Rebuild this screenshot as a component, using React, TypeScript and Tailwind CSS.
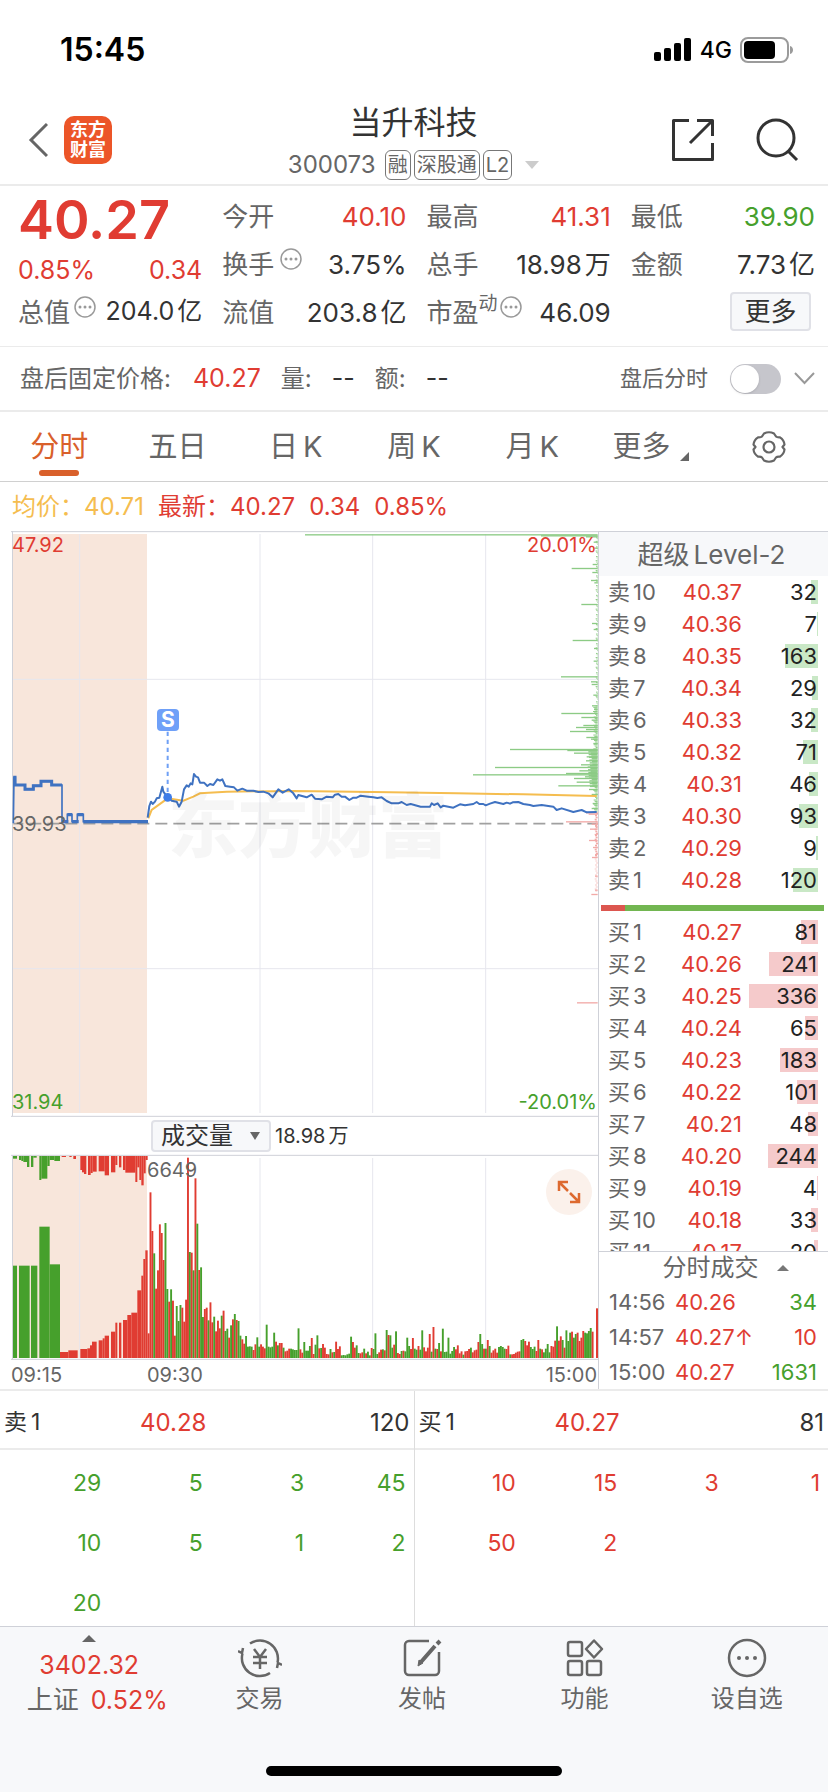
import { useState } from 'react'
import type { ReactNode } from 'react'

type Tone = 'up' | 'down' | 'flat'
type Level = [label: string, price: string, volume: number]

const TONE: Record<Tone, string> = {
  up: 'text-[#e03c32]',
  down: 'text-[#46a02c]',
  flat: 'text-[#333333]',
}

const ASKS: Level[] = [
  ['卖10', '40.37', 32],
  ['卖9', '40.36', 7],
  ['卖8', '40.35', 163],
  ['卖7', '40.34', 29],
  ['卖6', '40.33', 32],
  ['卖5', '40.32', 71],
  ['卖4', '40.31', 46],
  ['卖3', '40.30', 93],
  ['卖2', '40.29', 9],
  ['卖1', '40.28', 120],
]

const BIDS: Level[] = [
  ['买1', '40.27', 81],
  ['买2', '40.26', 241],
  ['买3', '40.25', 336],
  ['买4', '40.24', 65],
  ['买5', '40.23', 183],
  ['买6', '40.22', 101],
  ['买7', '40.21', 48],
  ['买8', '40.20', 244],
  ['买9', '40.19', 4],
  ['买10', '40.18', 33],
  ['买11', '40.17', 20],
]

const TRADES: Array<{ time: string; price: string; volume: number; tone: Tone }> = [
  { time: '14:56', price: '40.26', volume: 34, tone: 'down' },
  { time: '14:57', price: '40.27↑', volume: 10, tone: 'up' },
  { time: '15:00', price: '40.27', volume: 1631, tone: 'down' },
]

const TABS = ['分时', '五日', '日K', '周K', '月K', '更多']

// Call auction, 09:15 - 09:30
const AUCTION_LINE =
  '40,910 42,770 47,770 47,795 75,795 75,808 100,808 100,797 123,797 123,784 155,784 155,795 186,795 186,905 202,905 202,883 216,883 216,905 232,905 232,883 250,883 250,905 442,905'

const PRICE_LINE =
  '443,893 448,858 453,845 458,852 465,845 470,835 478,833 487,800 490,815 503,832 515,842 530,845 537,860 545,845 552,808 560,796 566,800 572,790 577,793 582,762 588,770 594,772 600,788 612,788 622,798 630,792 640,795 652,778 660,782 667,778 676,798 690,800 702,802 712,812 727,806 740,812 760,812 775,816 790,815 805,820 818,832 835,808 848,818 866,808 880,820 890,835 895,825 920,832 935,824 945,836 965,838 980,830 998,832 1005,824 1015,822 1025,830 1035,830 1048,840 1060,833 1070,833 1082,827 1105,830 1120,832 1132,834 1145,832 1160,843 1175,850 1195,850 1205,846 1220,855 1232,852 1262,860 1290,860 1295,850 1302,855 1313,850 1322,862 1330,857 1360,863 1380,853 1395,856 1420,852 1430,846 1438,852 1450,852 1457,856 1470,851 1485,846 1510,852 1520,848 1530,851 1538,847 1555,846 1570,852 1590,855 1600,858 1625,855 1660,860 1670,870 1685,865 1720,876 1745,870 1760,877 1790,876'

const AVERAGE_LINE =
  '445,895 455,870 503,835 550,842 580,830 600,820 680,815 880,813 1120,816 1370,820 1570,823 1790,828'

// Resting orders by price: [y, length]
const ASK_DEPTH: Array<[number, number]> = [
  [44, 878], [47, 170], [50, 35], [66, 12], [84, 10], [133, 15], [145, 78], [157, 16], [181, 20],
  [188, 10], [253, 49], [310, 17], [328, 12], [361, 75], [385, 11], [423, 12], [470, 110],
  [485, 20], [493, 18], [525, 13], [557, 17], [568, 11], [580, 109], [592, 49], [600, 18],
  [616, 43], [622, 65], [628, 35], [634, 83], [652, 34], [657, 20], [670, 13], [688, 263],
  [691, 91], [699, 71], [710, 33], [722, 35], [734, 50], [742, 308], [752, 55], [760, 95],
  [764, 374], [770, 38], [775, 71], [786, 63], [797, 118], [808, 26], [823, 18], [850, 15], [865, 18],
]
const BID_DEPTH: Array<[number, number]> = [
  [878, 35], [882, 27], [905, 95], [912, 18], [918, 8], [927, 23], [943, 9], [961, 26], [982, 14],
  [1003, 8], [1012, 17], [1068, 8], [1110, 8], [1123, 19], [1448, 62],
]

// Auction volume blocks: [x from, x to, y]
const MATCHED: Array<[number, number, number, 'r' | 'g']> = [
  [39, 51, 467, 'g'], [57, 89, 467, 'g'], [93, 112, 467, 'g'], [118, 149, 350, 'g'], [149, 180, 463, 'g'],
  [180, 205, 726, 'r'], [205, 233, 721, 'r'], [241, 262, 717, 'r'], [262, 270, 715, 'r'],
  [270, 276, 706, 'r'], [276, 290, 695, 'r'], [296, 308, 691, 'r'], [308, 314, 685, 'r'],
  [314, 327, 677, 'r'], [333, 346, 665, 'r'], [346, 352, 638, 'r'], [357, 364, 638, 'r'],
  [369, 382, 630, 'r'], [382, 394, 615, 'r'], [394, 412, 608, 'r'], [412, 424, 541, 'r'],
  [424, 430, 497, 'r'], [430, 436, 447, 'r'], [436, 443, 421, 'r'],
]
const UNMATCHED: Array<[number, number, number, 'r' | 'g']> = [
  [39, 51, 146, 'g'], [57, 64, 150, 'g'], [64, 70, 153, 'g'], [70, 81, 156, 'g'], [81, 88, 171, 'g'],
  [93, 100, 171, 'g'], [100, 110, 143, 'g'], [118, 124, 210, 'g'], [124, 142, 206, 'g'],
  [142, 149, 168, 'g'], [149, 163, 150, 'g'], [163, 180, 153, 'g'], [185, 198, 141, 'r'],
  [208, 215, 141, 'r'], [220, 228, 147, 'r'], [241, 246, 180, 'r'], [246, 252, 187, 'r'],
  [252, 259, 192, 'r'], [264, 272, 195, 'r'], [272, 278, 189, 'r'], [278, 290, 185, 'r'],
  [296, 314, 184, 'r'], [314, 327, 196, 'r'], [333, 346, 187, 'r'], [346, 352, 165, 'r'],
  [357, 364, 172, 'r'], [369, 376, 180, 'r'], [376, 406, 188, 'r'], [406, 412, 216, 'r'],
  [412, 418, 172, 'r'], [418, 424, 210, 'r'], [424, 431, 226, 'r'], [431, 437, 190, 'r'],
  [437, 443, 150, 'r'],
]

// Minute volume, y of the bar top and its colour
const MORNING =
  '670r 247r 363r 430g 536r 481r 343r 369r 450r 339g 537g 575r 538g 572r 677r 588g 633g 585g 593r 635r 569r 143r 426g 428r 481g 205r 341g 480r 472g 621g 597r 593r 631g 577r 637r 620g 664r 632r 655r 617g 602r 663g 656g 683r 646g 628r 612g 630r 633g 677g 688r 701r 678g 710g 709g 710g 720r 703r 682g 710g 703r 710r 715r 644g 710g 712g 710g 668g 695r 706g 699r 699r 713g 724r 722r 716r 716g 718g 720g 720g 655g 718r 728r'
const DAY =
  '696g 722g 722g 708g 684r 732r 704g 676g 715r 714g 702r 713r 732r 733r 717g 727r 726g 695r 717r 709r 736g 735g 736g 733g 731g 680g 696r 713r 706g 729g 730r 727r 716g 730r 725g 736g 714r 717g 670g 732g 727r 719r 718g 721r 660g 675r 676g 713g 704r 664g 729r 732r 723g 722r 724g 683g 708g 717r 684r 716g 719g 708r 719g 661g 712r 724r 713r 672r 725g 651r 716g 717r 699g 724r 656g 726g 725g 683g 731g 723g 711g 718r 706r 730r 724r 734g 724r 723r 717r 713g 727r 721r 719r 696r 672g 702g 716r 716g 690r 708g 728r 721r 716r 728r 711g 708g 711g 716g 717r 707r 733g 733r 732r 728r 725r 724r 690g 687g 693r 706r 695r 711g 717g 710g 723r 690r 716g 718r 727g 716g 702g 727g 708r 710r 692r 649g 692r 679r 690g 713r 661g 693g 668g 665r 683g 672g 668r 693r 683r 663r 668g 670g 663g 654g 665r'

const FILL = { r: '#e03c32', g: '#46a02c' }

function toBars(source: string, from: number, to: number) {
  const items = source.split(' ')
  const step = (to - from) / (items.length - 1)
  return items.map((item, i) => ({
    x: from + i * step,
    y: parseInt(item, 10),
    fill: item.endsWith('r') ? FILL.r : FILL.g,
  }))
}

const VOLUME_BARS = [...toBars(MORNING, 443, 904), ...toBars(DAY, 910, 1775)]

// 万 and 亿 stand a little apart from the number
function Amount({ value }: { value: string }) {
  const unit = /[万亿]$/.test(value) ? value.slice(-1) : ''
  return (
    <span className="flex gap-[3px]">
      <span>{unit ? value.slice(0, -1) : value}</span>
      {unit && <span>{unit}</span>}
    </span>
  )
}

function StatusBar() {
  return (
    <div className="flex h-[95px] items-center justify-between pr-[34px] pl-[60px] pt-[5px] text-black">
      <span className="text-[32px] font-semibold">15:45</span>
      <div className="flex items-center gap-2">
        <svg width="38" height="24" viewBox="0 0 38 24" aria-hidden="true">
          <rect x="0" y="14" width="7" height="9" rx="2" />
          <rect x="10" y="10" width="7" height="13" rx="2" />
          <rect x="20" y="5" width="7" height="18" rx="2" />
          <rect x="30" y="0" width="7" height="23" rx="2" />
        </svg>
        <span className="text-[23px] font-medium">4G</span>
        <svg width="54" height="26" viewBox="0 0 54 26" aria-hidden="true">
          <rect x="1" y="1" width="47" height="24" rx="7" fill="none" stroke="#9b9b9b" strokeWidth="2" />
          <rect x="4" y="4" width="31" height="18" rx="4" />
          <path d="M50 9c4 1 4 7 0 8z" fill="#9b9b9b" />
        </svg>
      </div>
    </div>
  )
}

function Header() {
  return (
    <header className="grid h-[91px] grid-cols-[1fr_auto_1fr] items-center border-b-2 border-[#ebebeb] pr-[29px] pl-7">
      <div className="flex items-center gap-4">
        <button type="button" aria-label="返回">
          <svg width="20" height="36" viewBox="0 0 20 36" fill="none" stroke="#666" strokeWidth="3">
            <path d="M19 2L3 18l16 16" />
          </svg>
        </button>
        <div className="flex size-12 flex-col items-center justify-center rounded-[10px] bg-[#ec5528] text-[18px] leading-[20px] font-bold text-white">
          <span>东方</span>
          <span>财富</span>
        </div>
      </div>
      <div className="flex flex-col items-center gap-[6px] pt-[5px]">
        <h1 className="text-[32px] leading-[40px] text-[#333]">当升科技</h1>
        <div className="flex h-8 items-center gap-[3px] text-[#666]">
          <span className="pr-[6px] text-[24px]">300073</span>
          <Tag>融</Tag>
          <Tag>深股通</Tag>
          <Tag>L2</Tag>
          <svg className="ml-[10px]" width="14" height="8" viewBox="0 0 14 8" fill="#ccc" aria-hidden="true">
            <path d="M0 0h14L7 8z" />
          </svg>
        </div>
      </div>
      <div className="flex items-center justify-end gap-10">
        <button type="button" aria-label="分享">
          <svg width="44" height="44" viewBox="0 0 44 44" fill="none" stroke="#333" strokeWidth="3">
            <path d="M18 2.500H2.500V41.500H41.500V25M26 2.500H41.500V18M41 3L19 25" strokeLinejoin="round" />
          </svg>
        </button>
        <button type="button" aria-label="搜索">
          <svg width="44" height="44" viewBox="0 0 44 44" fill="none" stroke="#333" strokeWidth="3">
            <circle cx="21" cy="20" r="18" />
            <path d="M33 33l9 9" />
          </svg>
        </button>
      </div>
    </header>
  )
}

function Tag({ children }: { children: ReactNode }) {
  return (
    <span className="flex h-[30px] items-center rounded-md border border-[#777] px-[2px] text-[20px]">
      {children}
    </span>
  )
}

function InfoDots() {
  return (
    <svg className="mb-[10px] shrink-0" width="22" height="22" viewBox="0 0 22 22" fill="#999" aria-hidden="true">
      <circle cx="11" cy="11" r="10" fill="none" stroke="#999" strokeWidth="1.500" />
      <circle cx="6" cy="11" r="1.500" />
      <circle cx="11" cy="11" r="1.500" />
      <circle cx="16" cy="11" r="1.500" />
    </svg>
  )
}

interface StatProps {
  label: string
  value: string
  tone?: Tone
  mark?: string
  info?: boolean
}

function Stat({ label, value, tone = 'flat', mark, info }: StatProps) {
  return (
    <div className="flex h-12 items-center justify-between whitespace-nowrap">
      <span className="flex items-center">
        <span className="text-[#666]">{label}</span>
        {mark && <sup className="top-0 mb-4 text-[19px] text-[#666]">{mark}</sup>}
        {info && <span className={mark ? 'pl-[2px]' : 'pl-[6px]'}><InfoDots /></span>}
      </span>
      <span className={TONE[tone]}>
        <Amount value={value} />
      </span>
    </div>
  )
}

function Quote() {
  return (
    <section className="grid grid-cols-4 gap-x-5 border-b border-[#ebebeb] pt-[6px] pr-[13px] pb-[10px] pl-[18px] text-[26px]">
      <div className="whitespace-nowrap">
        <div className="flex h-[54px] items-center text-[54px] font-semibold text-[#e03c32]">40.27</div>
        <div className="flex h-[50px] items-center justify-between text-[25px] text-[#e03c32]">
          <span>0.85%</span>
          <span>0.34</span>
        </div>
        <div className="flex h-8 items-center justify-between">
          <span className="flex items-center gap-1 text-[#666]">
            总值
            <InfoDots />
          </span>
          <span className="text-[25px] text-[#333]">
            <Amount value="204.0亿" />
          </span>
        </div>
      </div>
      <div>
        <Stat label="今开" value="40.10" tone="up" />
        <Stat label="换手" value="3.75%" info />
        <Stat label="流值" value="203.8亿" />
      </div>
      <div>
        <Stat label="最高" value="41.31" tone="up" />
        <Stat label="总手" value="18.98万" />
        <Stat label="市盈" value="46.09" mark="动" info />
      </div>
      <div>
        <Stat label="最低" value="39.90" tone="down" />
        <Stat label="金额" value="7.73亿" />
        <div className="flex h-12 items-center justify-end pr-1 pb-px">
          <button
            type="button"
            className="h-[39px] w-[81px] rounded border-2 border-[#e0e1e7] bg-[#f7f8fa] leading-none text-[#333]"
          >
            更多
          </button>
        </div>
      </div>
    </section>
  )
}

function AfterHours() {
  const [enabled, setEnabled] = useState(false)

  return (
    <section className="flex h-[65px] items-center border-b-2 border-[#ebebeb] pr-[13px] pl-5 text-[24px] text-[#666]">
      <span>盘后固定价格:</span>
      <span className="pl-[22px] text-[25px] text-[#e03c32]">40.27</span>
      <span className="pl-5">量:</span>
      <span className="pl-5 text-[25px] text-[#333]">--</span>
      <span className="pl-5">额:</span>
      <span className="pl-5 text-[25px] text-[#333]">--</span>
      <label className="ml-auto flex items-center gap-[22px] text-[22px]">
        盘后分时
        <input
          type="checkbox"
          checked={enabled}
          onChange={(e) => setEnabled(e.target.checked)}
          className="peer sr-only"
        />
        <span className="flex h-[30px] w-[51px] rounded-full bg-[#c6c6cc] p-px peer-checked:justify-end peer-checked:bg-[#d9602b]">
          <span className="size-7 rounded-full bg-white shadow" />
        </span>
      </label>
      <button type="button" aria-label="展开" className="pl-[13px]">
        <svg width="21" height="13" viewBox="0 0 21 13" fill="none" stroke="#999" strokeWidth="2">
          <path d="M1 1l9.500 10L20 1" />
        </svg>
      </button>
    </section>
  )
}

function Tabs() {
  const [active, setActive] = useState('分时')

  return (
    <nav className="grid h-[70px] grid-cols-7 border-b border-[#d0d0d0]">
      {TABS.map((tab) => (
        <button
          key={tab}
          type="button"
          onClick={() => setActive(tab)}
          className={`relative flex h-full items-center justify-center gap-[5px] text-[29px] ${
            tab === active ? 'text-[#d9602b]' : 'text-[#666]'
          }`}
        >
          {tab.endsWith('K') ? (
            <>
              <span>{tab[0]}</span>
              <span>K</span>
            </>
          ) : (
            tab
          )}
          {tab === '更多' && (
            <svg className="mt-5 ml-1" width="9" height="9" viewBox="0 0 9 9" fill="#666" aria-hidden="true">
              <path d="M9 0v9H0z" />
            </svg>
          )}
          {tab === active && (
            <span className="absolute bottom-[5px] left-1/2 h-[6px] w-10 -translate-x-1/2 rounded-full bg-[#d9602b]" />
          )}
        </button>
      ))}
      <button type="button" aria-label="设置" className="flex items-center justify-center">
        <svg width="34" height="32" viewBox="0 0 34 32" fill="none" stroke="#666" strokeWidth="2.200">
          <path
            d="M12 2.500Q17 0 22 2.500L24 5.500Q25 6.500 28 6.300Q32 9 32.500 13.500L30.500 16L32.500 18.500Q32 23 28 25.700Q25 25.500 24 26.500L22 29.500Q17 32 12 29.500L10 26.500Q9 25.500 6 25.700Q2 23 1.500 18.500L3.500 16L1.500 13.500Q2 9 6 6.300Q9 6.500 10 5.500Z"
            strokeLinejoin="round"
          />
          <circle cx="17" cy="16" r="5.500" />
        </svg>
      </button>
    </nav>
  )
}

function PriceChart() {
  return (
    <div className="relative text-[20px] leading-6">
      {/* three chart units to a pixel */}
      <svg className="block h-auto w-full" viewBox="33 33 1761 1758">
        <rect x="39" y="42" width="402" height="1737" fill="#f8e6db" />
        <g stroke="#e6e7ee" strokeWidth="3">
          <path d="M239 42V1779M780 42V1779M1118 42V1779M1457 42V1779M39 478H1794M39 1346H1794" />
        </g>
        <path d="M33 35H1794M37.500 33V1788M33 1789H1794" stroke="#cfd1d8" strokeWidth="3" fill="none" />
        <path d="M40 911H1794" stroke="#a0a0a0" strokeWidth="5" strokeDasharray="36 18" strokeDashoffset="6" />
        <g fill="#8ccb85">
          {ASK_DEPTH.map(([y, w]) => (
            <rect key={y} x={1793 - w} y={y - 1.5} width={w} height="4" />
          ))}
          {Array.from({ length: 200 }, (_, i) => {
            const y = 46 + i * 4.15
            const dense = y > 690 && y < 800
            const w = dense ? 16 + ((i * 7) % 15) : y > 560 ? 5 + ((i * 7) % 10) : (i * 5) % 7
            return <rect key={i} x={1793 - w} y={y} width={w} height={dense ? 4.2 : 3} />
          })}
        </g>
        <g fill="#f2aaa8">
          {BID_DEPTH.map(([y, w]) => (
            <rect key={y} x={1793 - w} y={y - 1.5} width={w} height="4" />
          ))}
          {Array.from({ length: 40 }, (_, i) => (
            <rect key={i} x={1788 - ((i * 3) % 5)} y={878 + i * 6} width="6" height={i < 22 ? 5 : 2} />
          ))}
        </g>
        <polyline points={AVERAGE_LINE} fill="none" stroke="#f5bd4f" strokeWidth="6" />
        <polyline points={AUCTION_LINE} fill="none" stroke="#3f72c1" strokeWidth="5" />
        <polyline
          points="44,770 44,795 75,795 75,808 100,808 100,797 123,797 123,784 155,784 155,795 186,795"
          fill="none"
          stroke="#3f72c1"
          strokeWidth="9"
        />
        <path d="M186 905H205M202 884H216M216 905H236M232 884H250M250 905H444" stroke="#3f72c1" strokeWidth="10" />
        <polyline points={PRICE_LINE} fill="none" stroke="#3f72c1" strokeWidth="6" strokeLinejoin="round" />
        <path d="M503 635V820" stroke="#6fa0f5" strokeWidth="6" strokeDasharray="13 11" />
        <circle cx="503" cy="832" r="13" fill="#3f7de8" />
      </svg>
      <span className="absolute top-[258px] left-[157px] text-[70px] leading-[76px] font-black text-black/[0.035]">
        东方财富
      </span>
      <span className="absolute top-[178px] left-[146px] flex size-[22px] items-center justify-center rounded bg-[#6fa0f8] text-[21px] font-bold text-white">
        S
      </span>
      <span className="absolute top-[2px] left-px text-[#e03c32]">47.92</span>
      <span className="absolute top-[2px] right-px text-[#e03c32]">20.01%</span>
      <span className="absolute top-[281px] left-px text-[#666]">39.93</span>
      <span className="absolute bottom-[3px] left-px text-[#46a02c]">31.94</span>
      <span className="absolute right-px bottom-[3px] text-[#46a02c]">-20.01%</span>
    </div>
  )
}

function VolumeChart() {
  return (
    <>
      <div className="flex h-[37px] items-center gap-1 pl-[140px] text-[20px] text-[#333]">
        <div className="relative">
          <select
            aria-label="指标"
            className="block h-[32px] w-[120px] appearance-none rounded border-2 border-[#e0e1e7] bg-[#f7f8fa] pl-2 text-[24px] leading-none"
          >
            <option>成交量</option>
            <option>成交额</option>
          </select>
          <svg
            className="pointer-events-none absolute top-3 right-[11px]"
            width="10"
            height="8"
            viewBox="0 0 10 8"
            fill="#666"
            aria-hidden="true"
          >
            <path d="M0 0h10L5 8z" />
          </svg>
        </div>
        <Amount value="18.98万" />
      </div>
      <div className="relative text-[20px] leading-6 text-[#666]">
        <svg className="block h-auto w-full" viewBox="33 132 1761 618">
          <rect x="39" y="138" width="402" height="606" fill="#f8e6db" />
          <path d="M239 144V744M780 144V744M1118 144V744M1457 144V744" stroke="#e6e7ee" strokeWidth="3" />
          <path d="M33 136H1794M37.500 136V748M33 748H1794" stroke="#cfd1d8" strokeWidth="3" fill="none" />
          {MATCHED.map(([from, to, y, c]) => (
            <rect key={from} x={from} y={y} width={to - from} height={744 - y} fill={FILL[c]} />
          ))}
          {UNMATCHED.map(([from, to, y, c]) => (
            <rect key={from} x={from} y="138" width={to - from} height={y - 138} fill={FILL[c]} />
          ))}
          {VOLUME_BARS.map((bar) => (
            <rect key={bar.x} x={bar.x} y={bar.y} width="5.700" height={744 - bar.y} fill={bar.fill} />
          ))}
          <rect x="1788" y="595" width="6" height="149" fill={FILL.r} />
        </svg>
        <span className="absolute top-[4px] left-[136px]">6649</span>
        <button
          type="button"
          aria-label="全屏"
          className="absolute top-[15px] right-[6px] flex size-[46px] items-center justify-center rounded-full bg-[#fbf1eb]"
        >
          <svg width="24" height="24" viewBox="0 0 24 24" fill="none" stroke="#dd6a30" strokeWidth="2.500">
            <path d="M2 11V2h9M2 2l9 9M22 13v9h-9M22 22l-9-9" />
          </svg>
        </button>
      </div>
      <div className="grid h-[29px] grid-cols-[136px_1fr_auto] items-center text-[20px] text-[#666]">
        <span>09:15</span>
        <span>09:30</span>
        <span className="pr-px">15:00</span>
      </div>
    </>
  )
}

function Depth({ levels, side }: { levels: Level[]; side: 'ask' | 'bid' }) {
  return (
    <table className="w-full table-fixed text-[22px] leading-7">
      <tbody>
        {levels.map(([label, price, volume]) => (
          <tr key={label} className="h-8">
            <th scope="row" className="w-[62px] p-0 pl-[9px] text-left font-normal whitespace-nowrap text-[#666]">
              <span className="flex gap-[3px]">
                <span>{label.slice(0, 1)}</span>
                <span>{label.slice(1)}</span>
              </span>
            </th>
            <td className="p-0 text-right text-[#e03c32]">{price}</td>
            <td className="relative w-[86px] p-0 pr-[11px] text-right text-[#222]">
              <span
                className={`absolute top-1 right-[10px] h-6 ${side === 'ask' ? 'bg-[#c9e8c6]' : 'bg-[#f5cacb]'}`}
                style={{ width: `${Math.round((volume / 336) * 69)}px` }}
              />
              <span className="relative">{volume}</span>
            </td>
          </tr>
        ))}
      </tbody>
    </table>
  )
}

function OrderBook() {
  return (
    <aside className="w-[230px] shrink-0 border-t border-l border-[#cfd1d8]">
      <h2 className="flex h-11 items-center justify-center gap-1 bg-[#f7f8fa] pr-1 text-[26px] text-[#666]">
        <span>超级</span>
        <span>Level-2</span>
      </h2>
      <Depth levels={ASKS} side="ask" />
      <div className="mt-[9px] mr-1 mb-[5px] ml-[2px] flex h-[6px] bg-[#72b651]">
        <div className="w-6 bg-[#dc564f]" />
      </div>
      <div className="h-[335px] overflow-hidden">
        <Depth levels={BIDS} side="bid" />
      </div>
      <button
        type="button"
        className="flex h-[33px] w-full items-center justify-center gap-[18px] border-t border-[#cfd1d8] pl-6 text-[24px] text-[#666]"
      >
        分时成交
        <svg width="12" height="6" viewBox="0 0 12 6" fill="#777" aria-hidden="true">
          <path d="M0 6L6 0l6 6z" />
        </svg>
      </button>
      <table className="w-full table-fixed text-[22px] leading-7">
        <tbody>
          {TRADES.map((trade) => (
            <tr key={trade.time} className="h-[35px]">
              <td className="w-[76px] p-0 pl-[10px] text-[#666]">{trade.time}</td>
              <td className="p-0 text-[#e03c32]">{trade.price}</td>
              <td className={`w-[70px] p-0 pr-[11px] text-right ${TONE[trade.tone]}`}>{trade.volume}</td>
            </tr>
          ))}
        </tbody>
      </table>
    </aside>
  )
}

interface QueueProps {
  name: string
  price: string
  volume: number
  rows: number[][]
  tone: Tone
}

function Queue({ name, price, volume, rows, tone }: QueueProps) {
  return (
    <div className="flex-1 text-[23px]">
      <div className="grid h-[59px] grid-cols-[136px_1fr_1fr] items-center border-b-2 border-[#ebebeb] px-1 pt-[6px] text-[#333]">
        <span>
          {name}
          <span className="pl-1">1</span>
        </span>
        <span className="text-[24px] text-[#e03c32]">{price}</span>
        <span className="text-right text-[24px]">{volume}</span>
      </div>
      <div className="h-[176px] overflow-hidden pt-[3px] pr-2">
        <table className={`w-full table-fixed ${TONE[tone]}`}>
          <tbody>
            {rows.map((row, i) => (
              <tr key={i} className="h-[60px]">
                {[0, 1, 2, 3].map((col) => (
                  <td key={col} className="p-0 text-right">
                    {row[col]}
                  </td>
                ))}
              </tr>
            ))}
          </tbody>
        </table>
      </div>
    </div>
  )
}

function NavItem({ label, children }: { label: string; children: ReactNode }) {
  return (
    <a href="#" className="flex flex-col items-center gap-[2px] pt-[10px] text-[24px] text-[#666]">
      <svg width="44" height="42" viewBox="0 0 44 42" fill="none" stroke="#666" strokeWidth="2.500" aria-hidden="true">
        {children}
      </svg>
      <span className="leading-9">{label}</span>
    </a>
  )
}

function BottomBar() {
  return (
    <footer className="border-t border-[#cfd1d8] bg-[#f7f8fa] pb-4">
      <nav className="grid grid-cols-5 pl-4">
        <a href="#" className="flex flex-col items-center pt-2 text-[25px] text-[#e03c32]">
          <svg className="mr-4" width="14" height="7" viewBox="0 0 14 7" fill="#666" aria-hidden="true">
            <path d="M0 7L7 0l7 7z" />
          </svg>
          <span className="mt-[5px] mr-4 leading-9">3402.32</span>
          <span className="flex items-center gap-3 leading-[34px]">
            <span className="text-[26px] text-[#666]">上证</span>0.52%
          </span>
        </a>
        <NavItem label="交易">
          <path d="M12 6.500A18 18 0 0 1 39.500 25.500M39 31l1-5 4 2M32 36A18 18 0 0 1 4.500 16.500M5 11l-1 5-4-2" />
          <path d="M16 12l6 8 6-8M22 20v12M15 20h14M15 26h14" />
        </NavItem>
        <NavItem label="发帖">
          <path d="M29 4H9a4 4 0 0 0-4 4v26a4 4 0 0 0 4 4h26a4 4 0 0 0 4-4V15" />
          <path d="M21 25L35 9M37 7l3-3" strokeWidth="4" />
          <path d="M18 29l1-6 4 3z" fill="#666" strokeWidth="1" />
        </NavItem>
        <NavItem label="功能">
          <rect x="6" y="5" width="14" height="14" rx="2" />
          <rect x="6" y="24" width="14" height="14" rx="2" />
          <rect x="25" y="24" width="14" height="14" rx="2" />
          <path d="M32 3.500l8 8.500-8 8.500-8-8.500z" strokeLinejoin="round" />
        </NavItem>
        <NavItem label="设自选">
          <circle cx="22" cy="21" r="18" />
          <g fill="#666" stroke="none">
            <circle cx="14" cy="21" r="2" />
            <circle cx="22" cy="21" r="2" />
            <circle cx="30" cy="21" r="2" />
          </g>
        </NavItem>
      </nav>
      <div className="mx-auto mt-[49px] h-[10px] w-[296px] rounded-full bg-black" />
    </footer>
  )
}

export default function App() {
  return (
    <div className="bg-white font-['Inter','Noto_Sans_CJK_SC',sans-serif]">
      <StatusBar />
      <Header />
      <Quote />
      <AfterHours />
      <Tabs />
      <div className="flex h-[49px] items-center gap-[14px] pl-3 text-[24px] text-[#e03c32]">
        <span className="text-[#f5bd4f]">均价：40.71</span>
        <span>最新：40.27</span>
        <span>0.34</span>
        <span>0.85%</span>
      </div>
      <main className="flex">
        <div className="min-w-0 flex-1 pl-[11px]">
          <PriceChart />
          <VolumeChart />
        </div>
        <OrderBook />
      </main>
      <section className="flex border-t-2 border-[#ebebeb]">
        <Queue
          name="卖"
          price="40.28"
          volume={120}
          tone="down"
          rows={[
            [29, 5, 3, 45],
            [10, 5, 1, 2],
            [20],
          ]}
        />
        <div className="w-px bg-[#dddddd]" />
        <Queue
          name="买"
          price="40.27"
          volume={81}
          tone="up"
          rows={[
            [10, 15, 3, 1],
            [50, 2],
          ]}
        />
      </section>
      <BottomBar />
    </div>
  )
}
